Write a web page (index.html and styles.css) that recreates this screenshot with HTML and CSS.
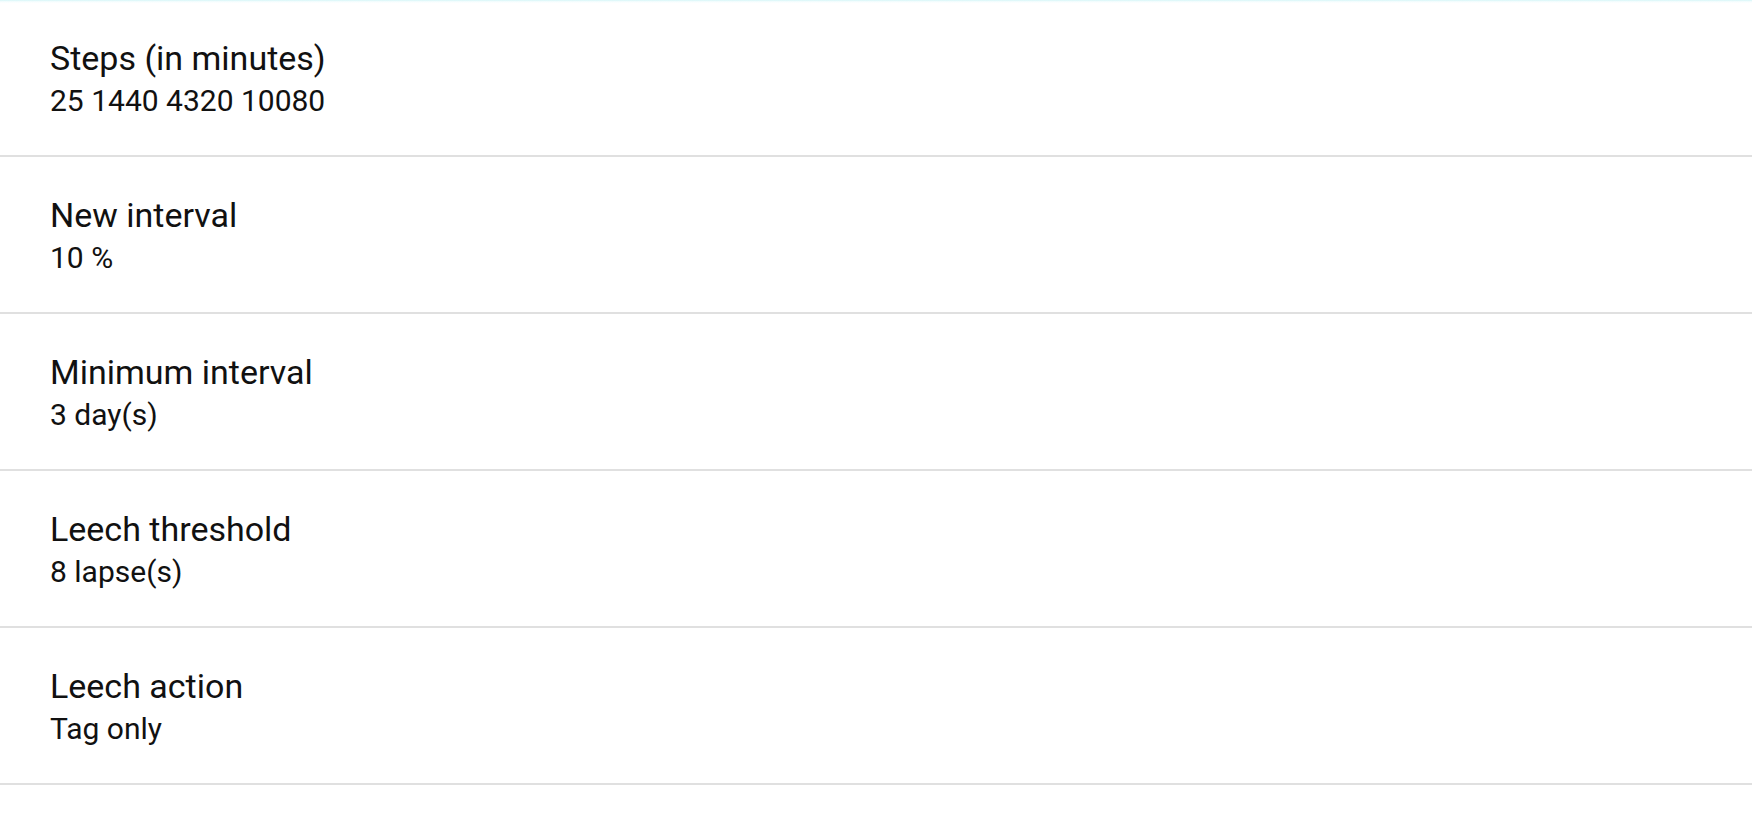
FILE: index.html
```html
<!DOCTYPE html>
<html lang="en">
<head>
<meta charset="utf-8">
<title>Lapses</title>
<link rel="stylesheet" href="styles.css">
</head>
<body>
<div class="top-shadow"></div>
<ul class="prefs">
  <li class="pref">
    <div class="pref-title">Steps (in minutes)</div>
    <div class="pref-summary">25 1440 4320 10080</div>
  </li>
  <li class="pref">
    <div class="pref-title">New interval</div>
    <div class="pref-summary">10 %</div>
  </li>
  <li class="pref">
    <div class="pref-title">Minimum interval</div>
    <div class="pref-summary">3 day(s)</div>
  </li>
  <li class="pref">
    <div class="pref-title">Leech threshold</div>
    <div class="pref-summary">8 lapse(s)</div>
  </li>
  <li class="pref">
    <div class="pref-title">Leech action</div>
    <div class="pref-summary">Tag only</div>
  </li>
</ul>
</body>
</html>
```

FILE: styles.css
```css
html, body {
  margin: 0;
  padding: 0;
  background: #ffffff;
}

body {
  font-family: Roboto, "Noto Sans", "Liberation Sans", sans-serif;
  color: #111111;
  position: relative;
  min-height: 825px;
}

.top-shadow {
  position: absolute;
  left: 0;
  right: 0;
  top: 0;
  height: 3px;
  background: linear-gradient(to bottom, #d6f6f8, rgba(230, 250, 252, 0.5) 50%, rgba(255, 255, 255, 0));
}

.prefs {
  list-style: none;
  margin: 0;
  padding: 0;
}

.pref {
  display: flex;
  flex-direction: column;
  justify-content: flex-start;
  height: 155px;
  box-sizing: content-box;
  padding: 0 0 0 50px;
  border-bottom: 2px solid #e0e0e0;
}

.pref-title {
  font-size: 34px;
  line-height: 40px;
  margin-top: 38px;
  white-space: nowrap;
}

.pref-summary {
  font-size: 30px;
  line-height: 40px;
  margin-top: 3px;
  white-space: nowrap;
}
```
